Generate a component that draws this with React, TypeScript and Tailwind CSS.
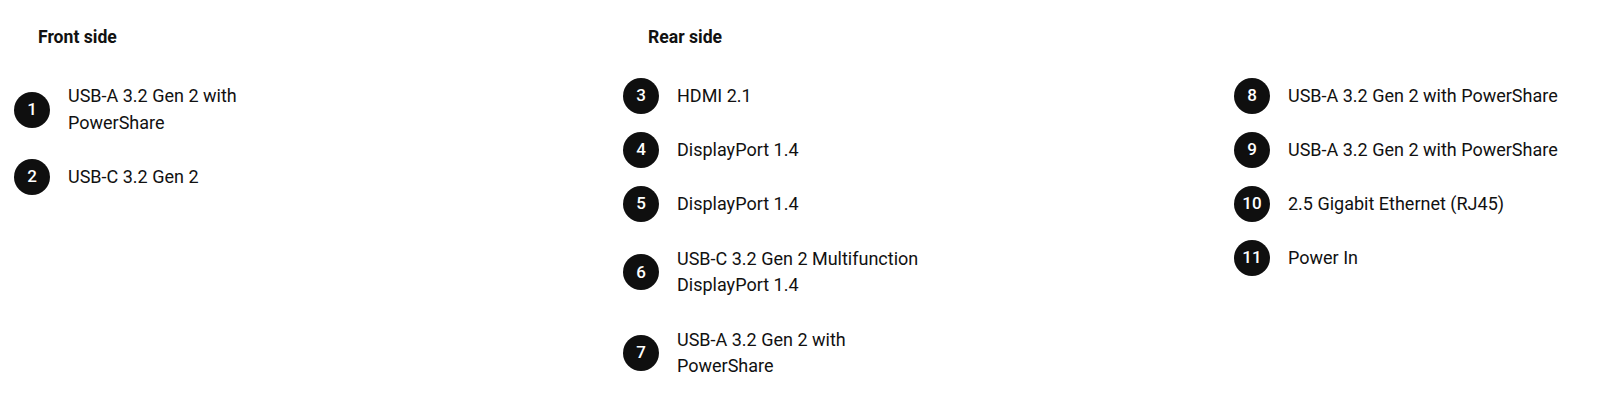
import React from 'react'

type Port = { n: number; label: string; mt: string }

const front: Port[] = [
  { n: 1, label: 'USB-A 3.2 Gen 2 with PowerShare', mt: 'mt-[33px]' },
  { n: 2, label: 'USB-C 3.2 Gen 2', mt: 'mt-[23px]' },
]

const rearLeft: Port[] = [
  { n: 3, label: 'HDMI 2.1', mt: 'mt-[27.6px]' },
  { n: 4, label: 'DisplayPort 1.4', mt: 'mt-[18px]' },
  { n: 5, label: 'DisplayPort 1.4', mt: 'mt-[18px]' },
  { n: 6, label: 'USB-C 3.2 Gen 2 Multifunction DisplayPort 1.4', mt: 'mt-[24px]' },
  { n: 7, label: 'USB-A 3.2 Gen 2 with PowerShare', mt: 'mt-[28px]' },
]

const rearRight: Port[] = [
  { n: 8, label: 'USB-A 3.2 Gen 2 with PowerShare', mt: 'mt-[27.6px]' },
  { n: 9, label: 'USB-A 3.2 Gen 2 with PowerShare', mt: 'mt-[18px]' },
  { n: 10, label: '2.5 Gigabit Ethernet (RJ45)', mt: 'mt-[18px]' },
  { n: 11, label: 'Power In', mt: 'mt-[18px]' },
]

const PortRow = ({ port, narrow }: { port: Port; narrow: boolean }) => (
  <li className={`flex items-center gap-[18px] ${port.mt}`}>
    <span className="flex h-9 w-9 shrink-0 items-center justify-center rounded-full bg-[#0f0f0f] text-[17px] font-medium text-white">
      {port.n}
    </span>
    <span className={`leading-[26.4px] ${narrow ? 'max-w-[255px]' : ''}`}>{port.label}</span>
  </li>
)

const App = () => {
  return (
    <div
      className="flex min-h-screen bg-white pl-[14px] pt-6 text-[18px] text-[#111]"
      style={{ fontFamily: 'Roboto, "Noto Sans", sans-serif' }}
    >
      <section className="w-[609px]">
        <h3 className="pl-6 text-[17.6px] font-bold leading-[26.4px]">Front side</h3>
        <ul className="flex flex-col">
          {front.map((p) => (
            <PortRow key={p.n} port={p} narrow />
          ))}
        </ul>
      </section>

      <section className="flex-1">
        <h3 className="pl-[25px] text-[17.6px] font-bold leading-[26.4px]">Rear side</h3>
        <div className="flex">
          <ul className="flex w-[611px] flex-col">
            {rearLeft.map((p) => (
              <PortRow key={p.n} port={p} narrow />
            ))}
          </ul>
          <ul className="flex flex-col">
            {rearRight.map((p) => (
              <PortRow key={p.n} port={p} narrow={false} />
            ))}
          </ul>
        </div>
      </section>
    </div>
  )
}

export default App
